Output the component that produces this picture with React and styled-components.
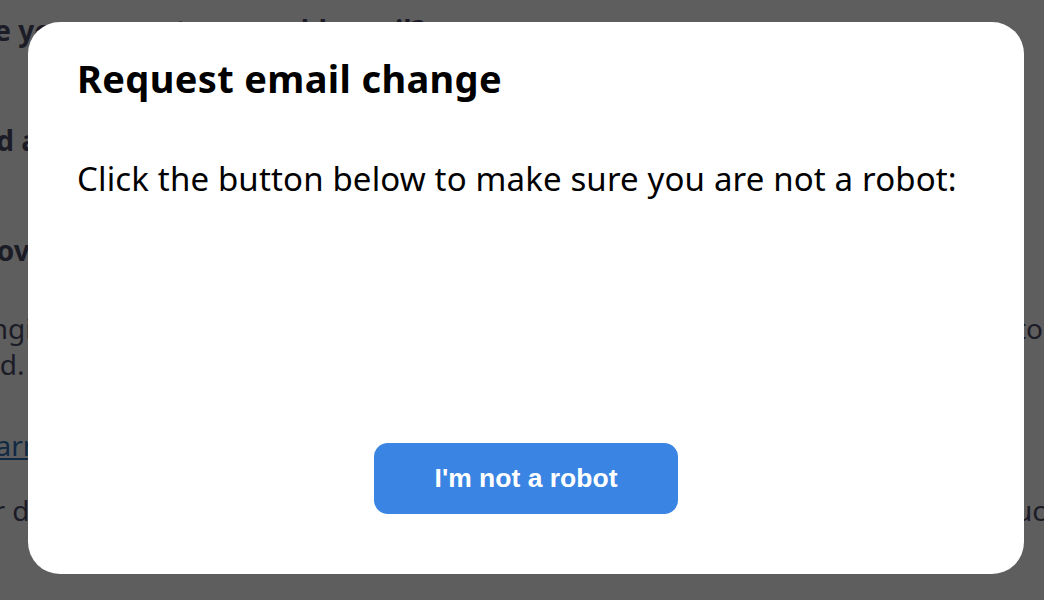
import styled, { createGlobalStyle } from 'styled-components'

const GlobalStyle = createGlobalStyle`
  html, body {
    margin: 0;
    padding: 0;
    overflow: hidden;
    background: #ffffff;
  }
  body {
    font-family: "Noto Sans", "DejaVu Sans", sans-serif;
  }
`

const Page = styled.main`
  width: 1300px;
  margin-left: -60px;
  padding-top: 10px;
  color: #4e4e6a;
  font-size: 28px;
`

const Heading = styled.h3`
  margin: 0 0 ${p => p.$gap || 60}px ${p => p.$indent || 0}px;
  font-size: 28px;
  font-weight: 700;
  line-height: 40px;
  white-space: nowrap;
`

const Para = styled.p`
  margin: 0 0 ${p => p.$gap || 0}px ${p => p.$indent || 0}px;
  line-height: 36px;
  white-space: nowrap;
`

const Link = styled.a`
  color: #2f6fb6;
  text-decoration: underline;
`

const Overlay = styled.div`
  position: fixed;
  inset: 0;
  background: rgba(0, 0, 0, 0.63);
  display: flex;
  padding: 22px 20px 26px 28px;
  box-sizing: border-box;
`

const Modal = styled.section`
  flex: 1;
  background: #ffffff;
  border-radius: 32px;
  display: flex;
  flex-direction: column;
  padding: 33px 49px 60px;
  color: #000000;
`

const Title = styled.h2`
  margin: 0;
  font-size: 38px;
  font-weight: 700;
  line-height: 46px;
  letter-spacing: 0.35px;
`

const Text = styled.p`
  margin: 56px 0 0;
  font-size: 33px;
  line-height: 44px;
  letter-spacing: 0.15px;
`

const RobotButton = styled.button`
  margin-top: auto;
  align-self: center;
  width: 304px;
  height: 71px;
  border: none;
  border-radius: 14px;
  background: #3a84e3;
  color: #ffffff;
  font-family: "Liberation Sans", Arial, sans-serif;
  font-size: 26.5px;
  font-weight: 700;
  cursor: pointer;
`

function App() {
  return (
    <>
      <GlobalStyle />
      <Page>
        <Heading $gap={70}>Have you access to your old email?</Heading>
        <Heading $gap={70}>Need a different address?</Heading>
        <Heading $gap={40} $indent={-10}>Approve it with a link</Heading>
        <Para>Changing the address of your account is simple and speedy, you would only need to follow</Para>
        <Para $gap={45}>asked. You will then receive a confirmation.</Para>
        <Para $gap={29} $indent={25}><Link href="#">Learn more and read the full guide</Link></Para>
        <Para>After details are checked we will send you an email with all its instructions to conduct</Para>
      </Page>
      <Overlay>
        <Modal>
          <Title>Request email change</Title>
          <Text>Click the button below to make sure you are not a robot:</Text>
          <RobotButton>I'm not a robot</RobotButton>
        </Modal>
      </Overlay>
    </>
  )
}

export default App
